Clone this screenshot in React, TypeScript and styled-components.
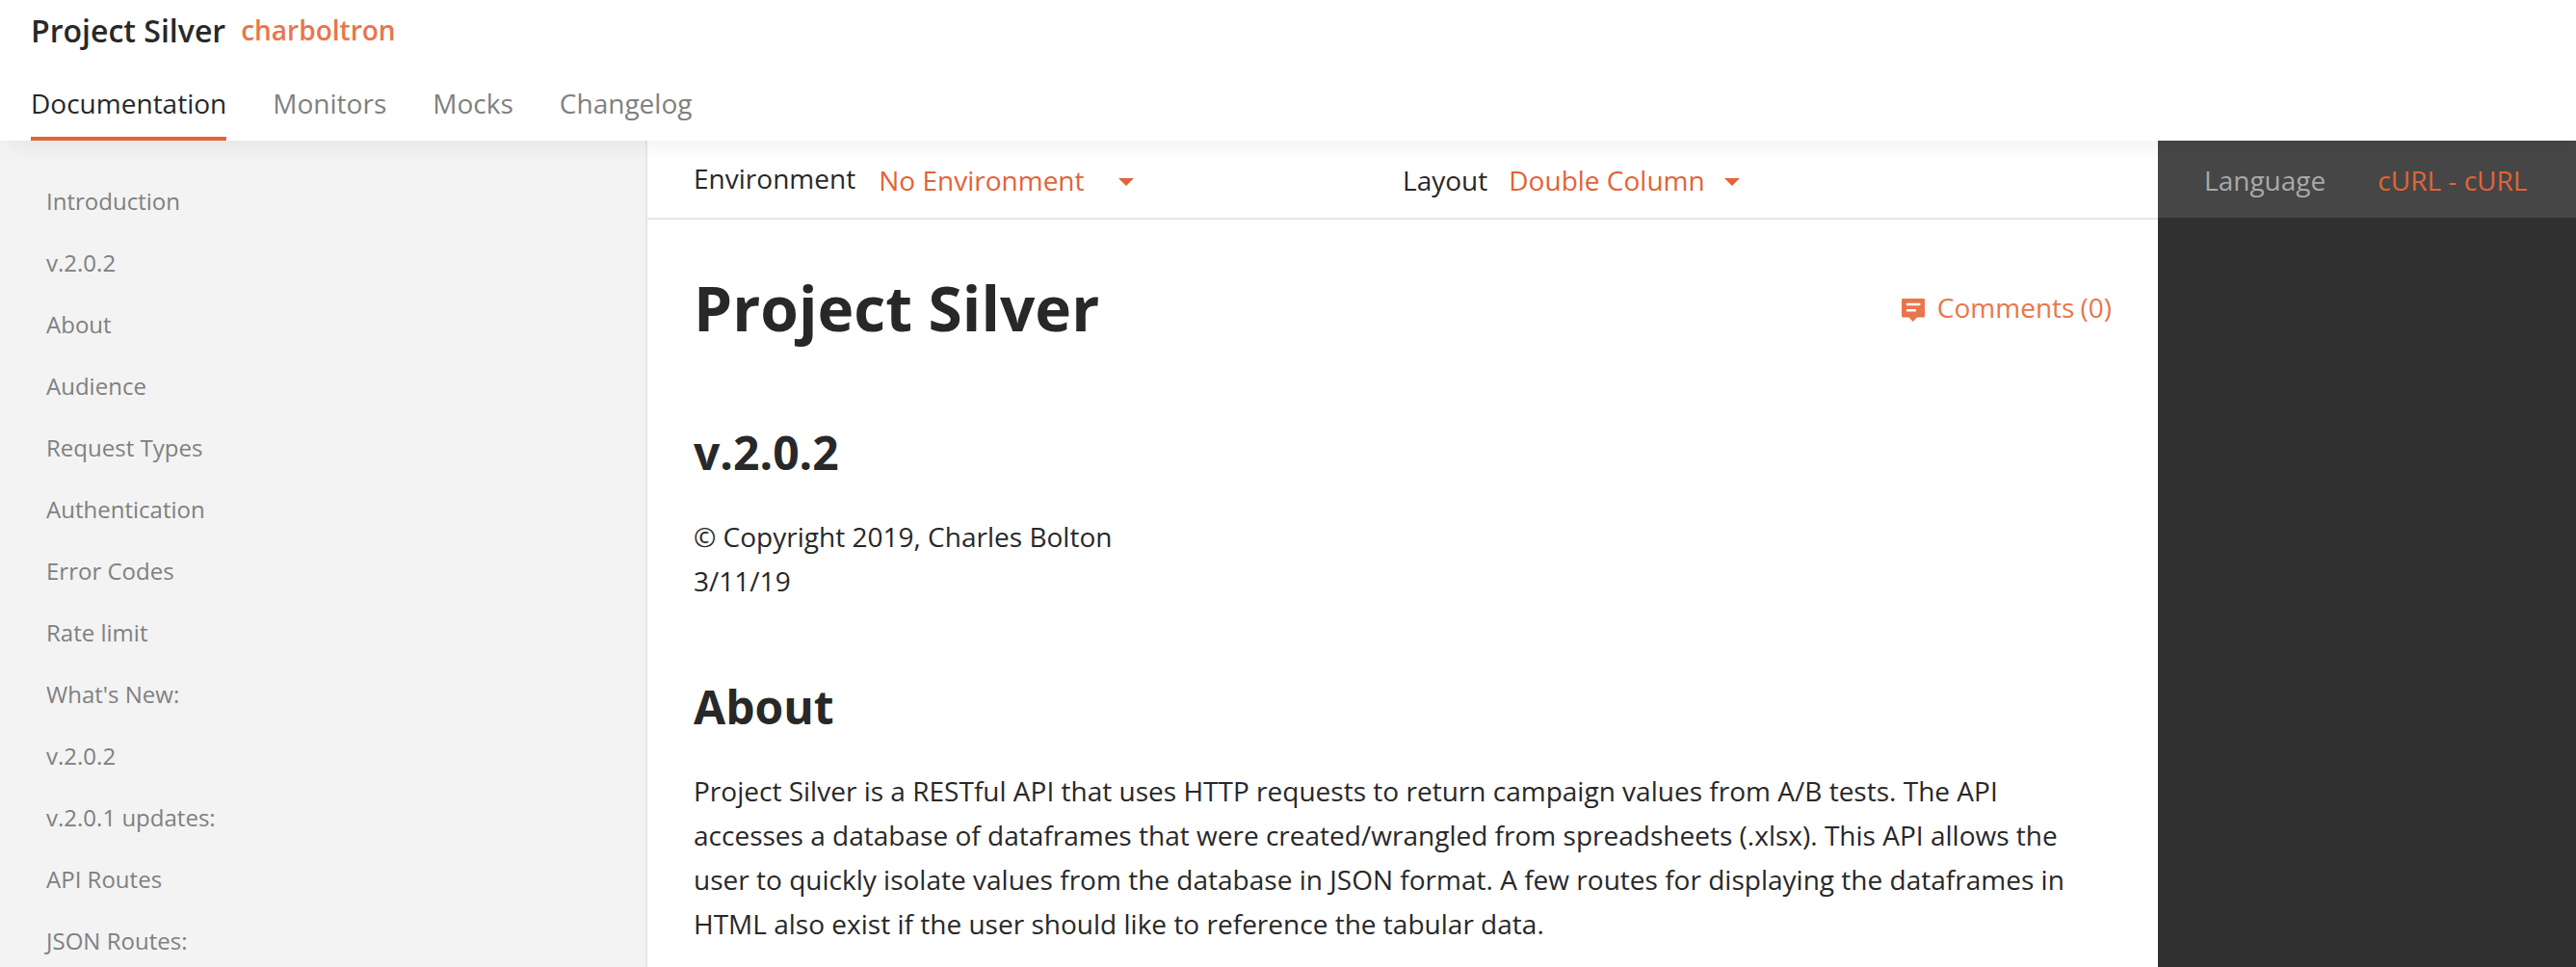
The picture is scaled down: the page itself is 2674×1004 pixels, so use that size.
import React from "react";
import styled, { createGlobalStyle } from "styled-components";

const GlobalStyle = createGlobalStyle`
  * { box-sizing: border-box; }
  body {
    margin: 0;
    background: #fff;
    font-family: "Open Sans", "Noto Sans", sans-serif;
    font-size: 28px;
    letter-spacing: 0.01px;
    color: #282828;
  }
`;

const Page = styled.div`
  display: flex;
  flex-direction: column;
  height: 1004px;
  overflow: hidden;
`;

const Header = styled.header`
  position: relative;
  z-index: 1;
  flex: none;
  height: 146px;
  padding: 0 32px;
  background: #fff;
  box-shadow: 0 15px 20px -8px rgba(0, 0, 0, 0.055);
`;

const TitleRow = styled.div`
  display: flex;
  align-items: center;
  gap: 16px;
  height: 62px;
  margin-bottom: 11px;
`;

const ProjectName = styled.span`
  font-size: 32px;
  font-weight: 600;
`;

const Owner = styled.a`
  font-weight: 600;
  color: #e8764b;
`;

const Tabs = styled.nav`
  display: flex;
  gap: 48px;
`;

const Tab = styled.a<{ $active?: boolean }>`
  height: 73px;
  line-height: 68px;
  color: ${(p) => (p.$active ? "#282828" : "#808080")};
  border-bottom: 4px solid ${(p) => (p.$active ? "#e36336" : "transparent")};
`;

const Columns = styled.div`
  display: flex;
  flex: 1;
  min-height: 0;
`;

const Sidebar = styled.aside`
  display: flex;
  flex-direction: column;
  width: 672px;
  padding: 31px 48px 0;
  background: #f3f3f3;
  border-right: 2px solid #e6e6e6;
`;

const SidebarItem = styled.a`
  flex: none;
  line-height: 64px;
  font-size: 24px;
  color: #808080;
`;

const Main = styled.main`
  display: flex;
  flex-direction: column;
  width: 1568px;
`;

const OptionsBar = styled.div`
  display: flex;
  flex: none;
  height: 82px;
  padding: 2px 48px 0;
  border-bottom: 2px solid #e6e6e6;
`;

const Option = styled.div<{ $width?: number }>`
  display: flex;
  align-items: center;
  width: ${(p) => (p.$width ? `${p.$width}px` : "auto")};
`;

const OptionLabel = styled.span<{ $gap: number; $raised?: boolean }>`
  margin-right: ${(p) => p.$gap}px;
  margin-bottom: ${(p) => (p.$raised ? 4 : 0)}px;
`;

const OptionValue = styled.span<{ $gap: number }>`
  margin-right: ${(p) => p.$gap}px;
  color: #e36336;
`;

const Caret = styled.i`
  width: 0;
  margin-top: 4px;
  border: 8px solid transparent;
  border-top-color: #e36336;
  border-bottom: 0;
`;

const Article = styled.article`
  padding: 47px 48px 0;
`;

const HeadingRow = styled.div`
  display: flex;
  align-items: center;
  justify-content: space-between;
  height: 88px;
  margin-bottom: 74px;
`;

const Title = styled.h1`
  margin: 0;
  font-size: 64px;
  font-weight: 700;
`;

const Comments = styled.a`
  display: flex;
  align-items: center;
  color: #e8764b;

  svg {
    margin: 6px 13px 0 0;
  }
`;

const Count = styled.span`
  margin-left: 6px;
`;

const SectionTitle = styled.h2`
  margin: 0 0 31px;
  line-height: 66px;
  font-size: 48px;
  font-weight: 700;
`;

const Paragraph = styled.p`
  margin: 0 0 75px;
  line-height: 46px;
`;

const CodePanel = styled.aside`
  flex: 1;
  background: #303030;
`;

const LanguageBar = styled.div`
  display: flex;
  align-items: center;
  gap: 54px;
  height: 80px;
  padding: 2px 0 0 48px;
  background: #464646;
  color: #a9a9a9;
`;

const Language = styled.span`
  color: #e36336;
`;

const sections = [
  "Introduction",
  "v.2.0.2",
  "About",
  "Audience",
  "Request Types",
  "Authentication",
  "Error Codes",
  "Rate limit",
  "What's New:",
  "v.2.0.2",
  "v.2.0.1 updates:",
  "API Routes",
  "JSON Routes:",
];

const CommentIcon = () => (
  <svg width="24" height="24" viewBox="0 0 24 24">
    <path
      fill="#e8764b"
      d="M1 0h22a1 1 0 0 1 1 1v17.500a1 1 0 0 1-1 1h-7l-4.200 4.500-4.200-4.500H1a1 1 0 0 1-1-1V1a1 1 0 0 1 1-1z"
    />
    <path stroke="#fff" strokeWidth="2.600" strokeLinecap="round" d="M6 6h12.300M6 12.200h8" />
  </svg>
);

export default function App() {
  return (
    <Page>
      <GlobalStyle />
      <Header>
        <TitleRow>
          <ProjectName>Project Silver</ProjectName>
          <Owner>charboltron</Owner>
        </TitleRow>
        <Tabs>
          <Tab $active>Documentation</Tab>
          <Tab>Monitors</Tab>
          <Tab>Mocks</Tab>
          <Tab>Changelog</Tab>
        </Tabs>
      </Header>
      <Columns>
        <Sidebar>
          {sections.map((name, i) => (
            <SidebarItem key={i}>{name}</SidebarItem>
          ))}
        </Sidebar>
        <Main>
          <OptionsBar>
            <Option $width={736}>
              <OptionLabel $gap={24} $raised>Environment</OptionLabel>
              <OptionValue $gap={35}>No Environment</OptionValue>
              <Caret />
            </Option>
            <Option>
              <OptionLabel $gap={22}>Layout</OptionLabel>
              <OptionValue $gap={20}>Double Column</OptionValue>
              <Caret />
            </Option>
          </OptionsBar>
          <Article>
            <HeadingRow>
              <Title>Project Silver</Title>
              <Comments>
                <CommentIcon />
                Comments
                <Count>(0)</Count>
              </Comments>
            </HeadingRow>
            <SectionTitle>v.2.0.2</SectionTitle>
            <Paragraph>
              © Copyright 2019, Charles Bolton
              <br />
              3/11/19
            </Paragraph>
            <SectionTitle>About</SectionTitle>
            <Paragraph>
              Project Silver is a RESTful API that uses HTTP requests to return campaign values from
              A/B tests. The API accesses a database of dataframes that were created/wrangled from
              spreadsheets (.xlsx). This API allows the user to quickly isolate values from the
              database in JSON format. A few routes for displaying the dataframes in HTML also exist
              if the user should like to reference the tabular data.
            </Paragraph>
          </Article>
        </Main>
        <CodePanel>
          <LanguageBar>
            <span>Language</span>
            <Language>cURL - cURL</Language>
          </LanguageBar>
        </CodePanel>
      </Columns>
    </Page>
  );
}
